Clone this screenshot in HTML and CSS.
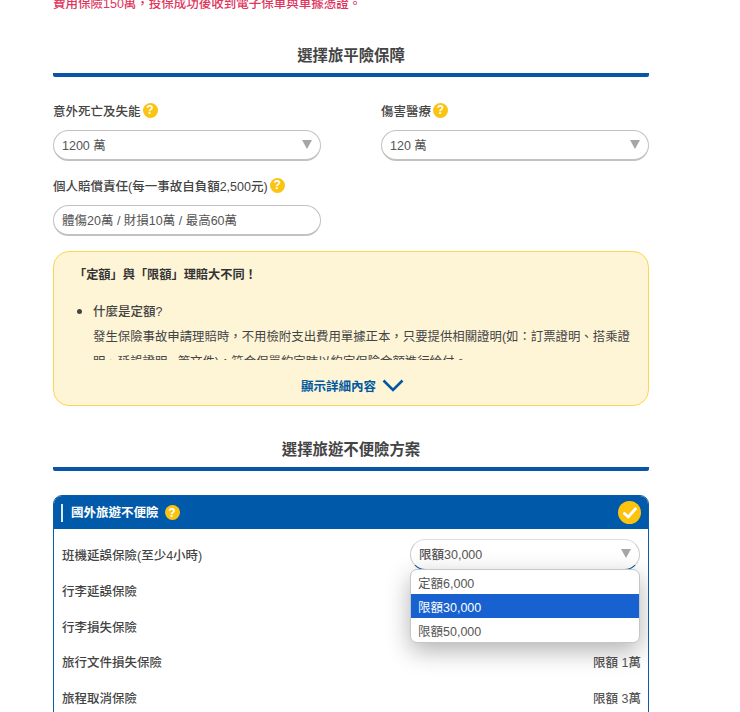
FILE: index.html
```html
<!DOCTYPE html>
<html lang="zh-Hant">
<head>
<meta charset="utf-8">
<title>選擇旅平險保障</title>
<link rel="stylesheet" href="styles.css">
</head>
<body>
<main class="page">
  <p class="notice">費用保險150萬，投保成功後收到電子保單與單據憑證。</p>

  <h2 class="section-title">選擇旅平險保障</h2>

  <div class="fields">
    <div class="field">
      <div class="label">意外死亡及失能<span class="help">?</span></div>
      <div class="select"><span>1200 萬</span><i class="caret"></i></div>
    </div>
    <div class="field">
      <div class="label">傷害醫療<span class="help">?</span></div>
      <div class="select"><span>120 萬</span><i class="caret"></i></div>
    </div>
    <div class="field">
      <div class="label">個人賠償責任(每一事故自負額2,500元)<span class="help">?</span></div>
      <div class="select"><span>體傷20萬 / 財損10萬 / 最高60萬</span></div>
    </div>
  </div>

  <section class="note">
    <h3 class="note-title">「定額」與「限額」理賠大不同！</h3>
    <div class="note-clip">
      <ul class="note-list">
        <li>
          <div class="note-q">什麼是定額?</div>
          <div class="note-a">發生保險事故申請理賠時，不用檢附支出費用單據正本，只要提供相關證明(如：訂票證明、搭乘證明、延誤證明...等文件)，符合保單約定時以約定保險金額進行給付。</div>
        </li>
      </ul>
    </div>
    <div class="note-more">顯示詳細內容
      <svg class="chevron" width="22" height="13" viewBox="0 0 22 13"><path d="M1.5 1.5 11 11 20.5 1.5" fill="none" stroke="#00589f" stroke-width="2.6"/></svg>
    </div>
  </section>

  <h2 class="section-title second">選擇旅遊不便險方案</h2>

  <section class="card">
    <header class="card-head">
      <span class="card-name">國外旅遊不便險</span><span class="help on-blue">?</span>
      <span class="check"><svg width="14" height="12" viewBox="0 0 14 12"><path d="M1.5 6.5 5.2 10 12.5 1.8" fill="none" stroke="#fff" stroke-width="2.8" stroke-linecap="round" stroke-linejoin="round"/></svg></span>
    </header>
    <div class="rows">
      <div class="row">
        <span>班機延誤保險(至少4小時)</span>
        <div class="row-select">
          <div class="select open"><span>限額30,000</span><i class="caret"></i></div>
          <ul class="menu">
            <li>定額6,000</li>
            <li class="active">限額30,000</li>
            <li>限額50,000</li>
          </ul>
        </div>
      </div>
      <div class="row"><span>行李延誤保險</span></div>
      <div class="row"><span>行李損失保險</span></div>
      <div class="row"><span>旅行文件損失保險</span><span class="amount">限額 1萬</span></div>
      <div class="row"><span>旅程取消保險</span><span class="amount">限額 3萬</span></div>
    </div>
  </section>
</main>
</body>
</html>
```
FILE: styles.css
```css
* { box-sizing: border-box; }
html, body { margin: 0; height: 712px; overflow: hidden; background: #fff; }
body {
  font-family: "Liberation Sans", "Noto Sans CJK TC", sans-serif;
  font-size: 12.5px;
  color: #444;
}
.page { width: 596px; margin-left: 53px; margin-top: -6px; }
.notice { margin: 0; height: 20px; line-height: 20px; color: #e0345c; font-size: 12.5px; font-weight: 500; }

.section-title {
  margin: 0;
  padding-top: 30px;
  height: 63px;
  border-bottom: 4px solid #0a55a5;
  border-radius: 0 0 2px 2px;
  line-height: 24px;
  text-align: center;
  font-size: 15.4px;
  font-weight: 700;
  color: #444;
}
.section-title.second { height: 65px; padding-top: 32px; }

.fields { display: grid; grid-template-columns: 268px 268px; column-gap: 60px; row-gap: 14px; margin-top: 23px; }
.label { display: flex; align-items: center; height: 20px; font-weight: 500; margin-bottom: 10px; }
.help {
  display: inline-flex; align-items: center; justify-content: center;
  width: 15px; height: 15px; margin-left: 2px;
  border-radius: 50%;
  background: #fbc312;
  color: #fff;
  font-size: 12px;
  font-weight: 700;
  font-family: "Liberation Sans", sans-serif;
}
.select {
  display: flex; align-items: center; justify-content: space-between;
  height: 31px; padding: 0 8px 2px 8px;
  border: 1px solid #c2c2c2;
  border-bottom-width: 2px;
  border-radius: 16px;
  background: #fff;
  color: #555;
}
.caret { width: 0; height: 0; border-left: 5.5px solid transparent; border-right: 5.5px solid transparent; border-top: 9px solid #a6a6a6; }

.note {
  height: 155px; margin-top: 15px;
  padding: 13px 13px 0 20px;
  background: #fef5d7;
  border: 1px solid #fbd64e;
  border-radius: 16px;
}
.note-title { margin: 0; font-size: 12.2px; line-height: 20px; font-weight: 700; color: #333; }
.note-clip { height: 59px; margin-top: 16px; overflow: hidden; }
.note-list { margin: 0; padding: 0 0 0 19px; list-style: disc; }
.note-list li::marker { font-size: 16px; line-height: 20px; }
.note-q { line-height: 20px; font-weight: 500; }
.note-a { font-size: 12.4px; line-height: 25px; margin-top: 3px; }
.note-more { display: flex; justify-content: center; align-items: center; gap: 6px; margin-top: 14px; margin-right: 4px; height: 22px; color: #00589f; font-weight: 700; }

.card { margin-top: 24px; border: 1px solid #0a5cab; border-radius: 9px 9px 0 0; height: 230px; overflow: hidden; }
.card-head { display: flex; align-items: center; height: 33px; padding: 0 7px 0 7px; background: #005aa9; color: #fff; font-weight: 700; }
.card-name { border-left: 2px solid #d6ecff; padding-left: 8px; line-height: 18px; }
.help.on-blue { margin-left: 6px; }
.check { margin-left: auto; display: flex; align-items: center; justify-content: center; width: 23px; height: 23px; border-radius: 50%; background: #fcc40f; }

.rows { padding: 8px 8px 0; }
.row { display: flex; align-items: center; justify-content: space-between; height: 35.7px; font-weight: 500; }
.amount { color: #555; font-weight: 500; margin-right: -1px; }
.row-select { position: relative; width: 230px; }
.select.open { border-color: #ddd #ccc #0a5cab; border-width: 1px; }
.menu {
  position: absolute; left: 0; right: 0; top: 30px;
  margin: 0; padding: 0; list-style: none;
  height: 74px;
  background: #fff;
  border: 1px solid #c6c6c6;
  border-radius: 7px;
  box-shadow: 0 8px 24px rgba(0,0,0,.3);
  overflow: hidden;
  color: #555;
  z-index: 2;
}
.menu li { height: 24px; line-height: 28px; padding-left: 7px; font-weight: 400; }
.menu li.active { background: #1762d0; color: #fff; }
```
